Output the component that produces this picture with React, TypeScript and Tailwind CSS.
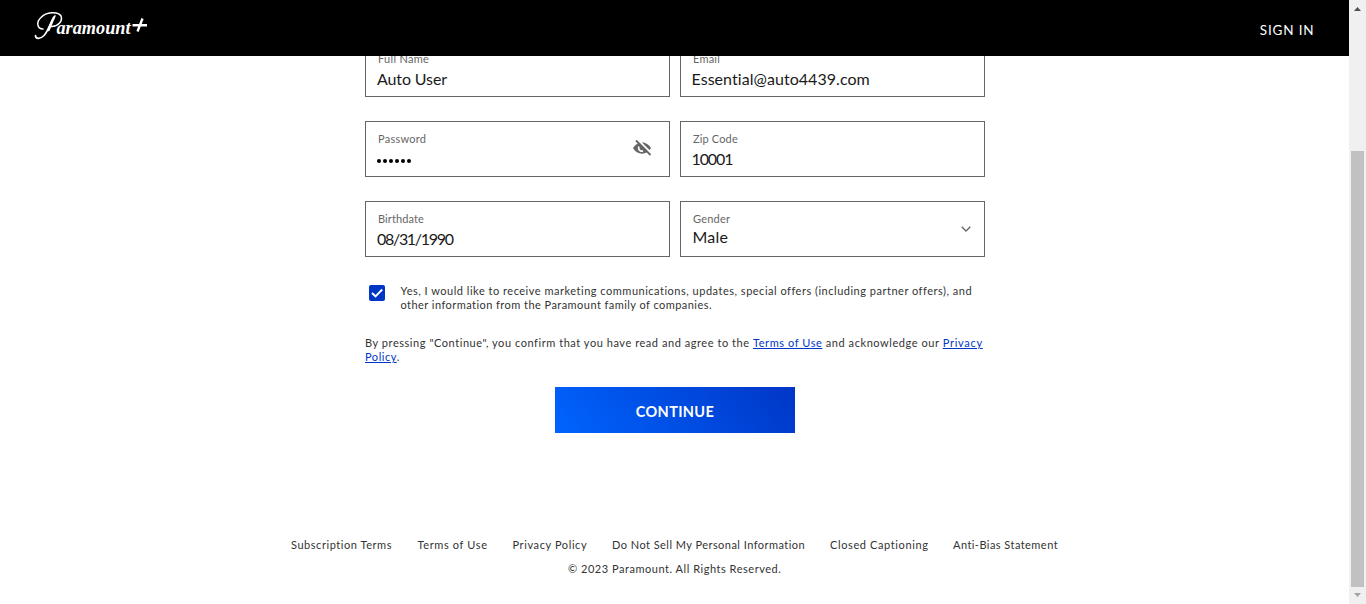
import type { ReactNode } from "react";

function Logo() {
  return (
    <svg width="114" height="30" viewBox="0 0 114 30" className="ml-[34px] -mt-1" role="img" aria-label="Paramount+">
      <path
        d="M9 18C3 18 2 11 7 6.500C12 1 24 0 27 5C29 10 24 16 17 15.500"
        fill="none"
        stroke="white"
        strokeWidth="1.500"
        strokeLinecap="round"
      />
      <path d="M21 5C17 9 15 19 10 24.500C6 28.500 1.500 28 1.500 24.500" fill="none" stroke="white" strokeWidth="1.700" strokeLinecap="round" />
      <path d="M20 6.500C18 10 16.500 15 14.500 19" fill="none" stroke="white" strokeWidth="2.400" strokeLinecap="round" />
      <text x="22.500" y="23" fill="white" fontFamily="Liberation Serif, serif" fontStyle="italic" fontWeight="700" fontSize="19" textLength="74" lengthAdjust="spacingAndGlyphs">
        aramount
      </text>
      <path d="M98.500 14.200H113M108.500 7.500L103.500 20.500" fill="none" stroke="white" strokeWidth="2.400" />
    </svg>
  );
}

function Field({ label, labelClass, children, icon }: { label: string; labelClass: string; children: ReactNode; icon?: ReactNode }) {
  return (
    <div className="flex h-14 items-center justify-between border border-[#666] pl-[11px]">
      <div className="flex h-full flex-col pt-[10px]">
        <span className={"ml-px h-[14px] text-[11px] leading-[14px] whitespace-nowrap text-[#666] " + labelClass}>{label}</span>
        {children}
      </div>
      {icon}
    </div>
  );
}

const value = "mt-[3px] text-[16px] leading-5 whitespace-nowrap text-[#1a1a1a] ";

export default function App() {
  return (
    <div className="flex h-[604px] w-[1366px] overflow-hidden bg-white font-['Lato',sans-serif]">
      <div className="flex w-[1349px] flex-col">
        <header className="relative z-10 flex h-14 shrink-0 items-center justify-between bg-black">
          <Logo />
          <a className="mt-[3px] mr-[34.500px] text-[13.500px] leading-4 tracking-[0.850px] text-white">SIGN IN</a>
        </header>

        <main className="-mt-[15px] ml-[365px] w-[620px]">
          <div className="grid grid-cols-2 gap-x-[10px] gap-y-6">
            <Field label="Full Name" labelClass="tracking-[0.300px]">
              <span className={value + "tracking-[-0.120px]"}>Auto User</span>
            </Field>
            <Field label="Email" labelClass="tracking-[0.200px]">
              <span className={value + "-ml-[0.500px] tracking-[0.050px]"}>Essential@auto4439.com</span>
            </Field>
            <Field
              label="Password"
              labelClass="tracking-[0.250px]"
              icon={
                <svg width="20" height="18" viewBox="0 0 20 18" className="mr-[17px] -mt-[3px]">
                  <path d="M1 9C5 1.500 15 1.500 19 9C15 16.500 5 16.500 1 9Z" fill="#666" />
                  <path d="M6.800 7.500C6 10.500 8 12.700 11 12" fill="none" stroke="white" strokeWidth="1.600" />
                  <path d="M5.500 0.500L19.500 14.500" stroke="white" strokeWidth="2" />
                  <path d="M4 1.500L18.500 16" stroke="#666" strokeWidth="1.800" />
                </svg>
              }
            >
              <div className="mt-[13px] flex gap-[2px]" aria-label="Password value">
                {[0, 1, 2, 3, 4, 5].map((i) => (
                  <i key={i} className="h-1 w-1 rounded-full bg-black" />
                ))}
              </div>
            </Field>
            <Field label="Zip Code" labelClass="tracking-[0.150px]">
              <span className={value + "-ml-[0.500px] tracking-[-1.100px]"}>10001</span>
            </Field>
            <Field label="Birthdate" labelClass="tracking-[0.100px]">
              <span className={value + "tracking-[-1.300px]"}>08/31/1990</span>
            </Field>
            <Field
              label="Gender"
              labelClass="tracking-[0.200px]"
              icon={
                <svg width="10" height="6" viewBox="0 0 10 6" className="mr-[13px]">
                  <path d="M0.700 0.700L5 5L9.300 0.700" fill="none" stroke="#666" strokeWidth="1.300" />
                </svg>
              }
            >
              <span className="mt-px ml-[0.500px] text-[16px] leading-5 tracking-[0.200px] text-[#1a1a1a]">Male</span>
            </Field>
          </div>

          <div className="mt-[27px] flex pl-1">
            <svg width="16" height="16" viewBox="0 0 16 16" className="mt-px shrink-0">
              <rect width="16" height="16" rx="2" fill="#0036c6" />
              <path d="M3 8L6.500 11.300L13.200 4.500" fill="none" stroke="white" strokeWidth="1.900" />
            </svg>
            <p className="ml-[15.500px] text-[11px] leading-[14px] whitespace-nowrap text-[#333]">
              <span className="block tracking-[0.510px]">Yes, I would like to receive marketing communications, updates, special offers (including partner offers), and</span>
              <span className="block tracking-[0.450px]">other information from the Paramount family of companies.</span>
            </p>
          </div>

          <p className="mt-6 text-[11px] leading-[14px] whitespace-nowrap text-[#333]">
            <span className="block tracking-[0.570px]">
              <span className="tracking-[0.550px]">By pressing "Continue", you confirm that you have read and agree to the </span>
              <a className="text-[#0036c6] underline">Terms of Use</a> and acknowledge our <a className="tracking-[0.700px] text-[#0036c6] underline">Privacy</a>
            </span>
            <span className="block tracking-[0.550px]">
              <a className="text-[#0036c6] underline">Policy</a>.
            </span>
          </p>

          <button className="mx-auto mt-[23px] block h-[46px] w-60 bg-[linear-gradient(50deg,#0064ff,#0036c6)] pt-1 text-[14.500px] leading-5 font-bold tracking-[0.350px] text-white">
            CONTINUE
          </button>
        </main>

        <footer className="mt-[105px] text-[11px] leading-[14px] whitespace-nowrap text-[#333]">
          <nav className="ml-[291px] flex">
            <a className="w-[126.500px] tracking-[0.550px]">Subscription Terms</a>
            <a className="w-[95px] tracking-[0.630px]">Terms of Use</a>
            <a className="w-[99.500px] tracking-[0.600px]">Privacy Policy</a>
            <a className="w-[218px] tracking-[0.460px]">Do Not Sell My Personal Information</a>
            <a className="w-[123px] tracking-[0.610px]">Closed Captioning</a>
            <a className="tracking-[0.450px]">Anti-Bias Statement</a>
          </nav>
          <p className="mt-[10px] ml-[568px] tracking-[0.530px]">© 2023 Paramount. All Rights Reserved.</p>
        </footer>
      </div>

      <div className="flex w-[17px] flex-col items-center bg-[#f0f0f0]">
        <svg width="7" height="4" viewBox="0 0 7 4" className="mt-[7px]">
          <path d="M0 4L3.500 0L7 4Z" fill="#505050" />
        </svg>
        <div className="mt-[140px] h-[436px] w-[13px] bg-[#c1c1c1]" />
        <svg width="7" height="4" viewBox="0 0 7 4" className="mt-[6px]">
          <path d="M0 0H7L3.500 4Z" fill="#a3a3a3" />
        </svg>
      </div>
    </div>
  );
}
